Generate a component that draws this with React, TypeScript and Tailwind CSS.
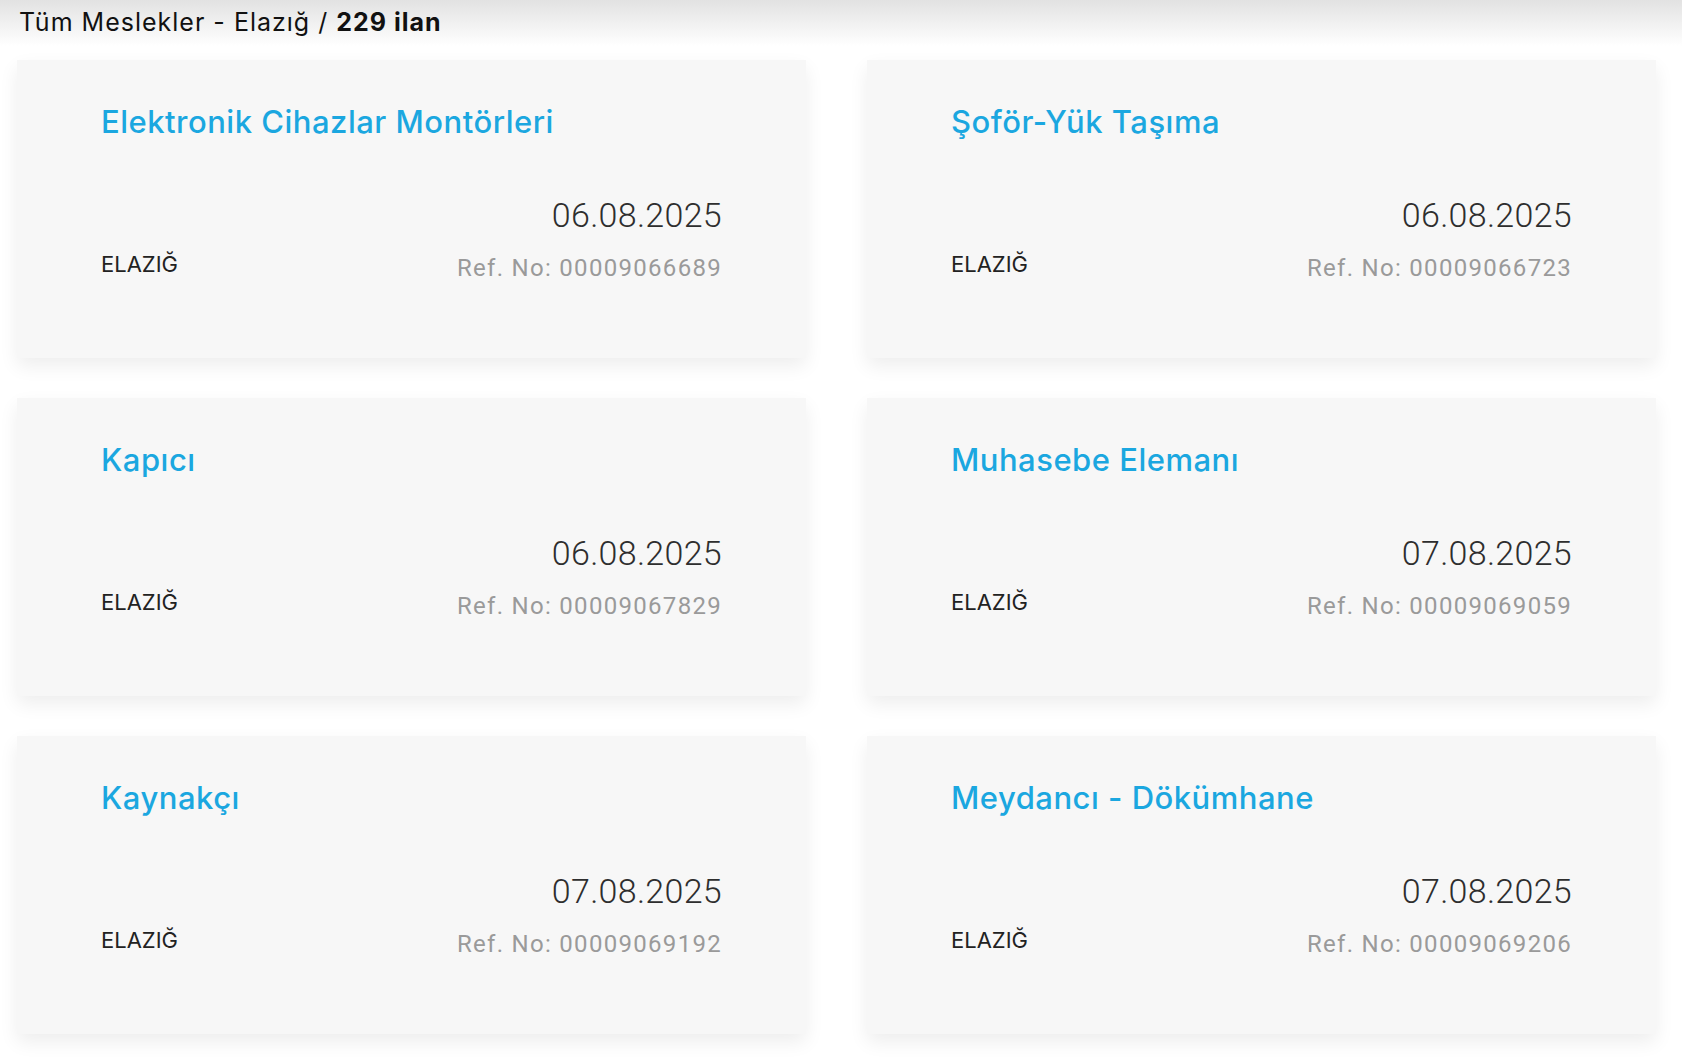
const jobs = [
  { title: 'Elektronik Cihazlar Montörleri', date: '06.08.2025', ref: '00009066689' },
  { title: 'Şoför-Yük Taşıma', date: '06.08.2025', ref: '00009066723' },
  { title: 'Kapıcı', date: '06.08.2025', ref: '00009067829' },
  { title: 'Muhasebe Elemanı', date: '07.08.2025', ref: '00009069059' },
  { title: 'Kaynakçı', date: '07.08.2025', ref: '00009069192' },
  { title: 'Meydancı - Dökümhane', date: '07.08.2025', ref: '00009069206' },
]

function JobCard({ title, date, refNo }: { title: string; date: string; refNo: string }) {
  return (
    <div className="h-[298px] bg-[#f7f7f7] px-[84px] pt-[44px] shadow-[0_8px_18px_rgba(0,0,0,0.07)]">
      <a href="#" className="block font-['Inter',sans-serif] text-[31px] font-medium leading-[36px] tracking-[0.5px] text-[#1ba7e0]">
        {title}
      </a>
      <div className="mt-[54px] flex items-end justify-between">
        <span className="mb-[4px] font-['Inter',sans-serif] text-[22px] leading-[28px] text-[#222]">ELAZIĞ</span>
        <div className="flex flex-col items-end">
          <span className="font-['Roboto',sans-serif] text-[34px] font-light leading-[42px] tracking-[0.3px] text-[#2e2e2e]">{date}</span>
          <span className="mt-[18px] font-['Roboto',sans-serif] text-[24px] leading-[28px] tracking-[1.3px] text-[#9a9a9a]">
            Ref. No: {refNo}
          </span>
        </div>
      </div>
    </div>
  )
}

export default function App() {
  return (
    <div className="min-h-screen w-full bg-white">
      <div className="flex h-[46px] items-center bg-gradient-to-b from-[#e2e2e2] to-white px-[19px]">
        <h1 className="font-['Inter',sans-serif] text-[25px] font-normal tracking-[1px] text-[#111]">
          Tüm Meslekler - Elazığ / <span className="font-bold">229 ilan</span>
        </h1>
      </div>
      <div className="mt-[14px] grid grid-cols-2 gap-x-[61px] gap-y-[40px] pl-[17px] pr-[26px]">
        {jobs.map((job) => (
          <JobCard key={job.ref} title={job.title} date={job.date} refNo={job.ref} />
        ))}
      </div>
    </div>
  )
}
